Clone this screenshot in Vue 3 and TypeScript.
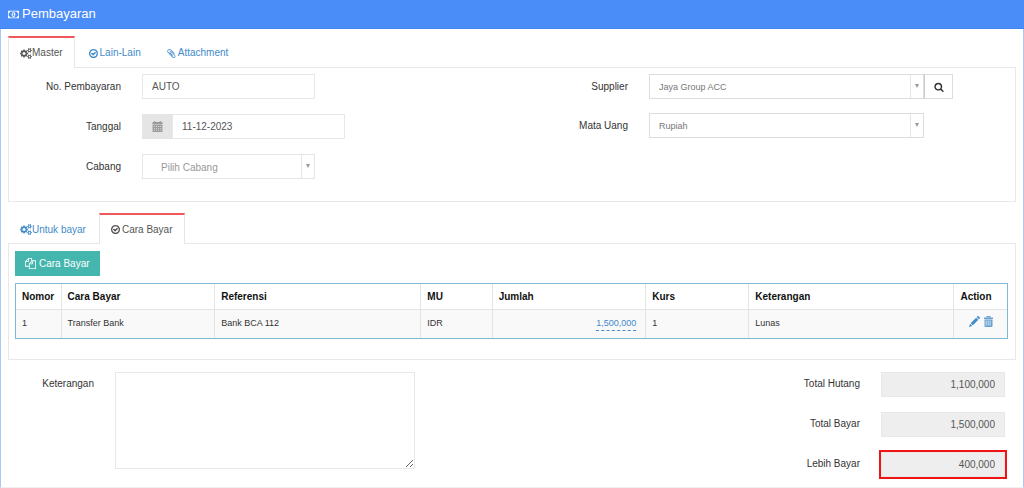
<script setup lang="ts">
import { ref } from 'vue'

interface Glyph {
  box: string
  d: string
}
interface Tab {
  label: string
  icon: string
  active: boolean
}

const icons: Record<string, Glyph> = {
  money: {
    box: '0 0 1920 1792',
    d: 'M768 1152h384v-96h-128v-448h-114l-148 137 77 80q42-37 55-57h2v288h-128v96zm512-256q0 70-21 142t-59.5 134-101.5 101-138 39-138-39-101.5-101-59.5-134-21-142 21-142 59.5-134 101.5-101 138-39 138 39 101.5 101 59.5 134 21 142zm512 256v-512q-106 0-181-75t-75-181h-1152q0 106-75 181t-181 75v512q106 0 181 75t75 181h1152q0-106 75-181t181-75zm128-832v1152q0 26-19 45t-45 19h-1792q-26 0-45-19t-19-45v-1152q0-26 19-45t45-19h1792q26 0 45 19t19 45z',
  },
  cogs: {
    box: '0 0 1920 1792',
    d: 'M896 896q0-106-75-181t-181-75-181 75-75 181 75 181 181 75 181-75 75-181zm768 512q0-52-38-90t-90-38-90 38-38 90q0 53 37.5 90.5t90.5 37.5 90.5-37.5 37.5-90.5zm0-1024q0-52-38-90t-90-38-90 38-38 90q0 53 37.5 90.5t90.5 37.5 90.5-37.5 37.5-90.5zm-384 421v185q0 10-7 19.5t-16 10.5l-155 24q-11 35-32 76 34 48 90 115 7 11 7 20 0 12-7 19-23 30-82.5 89.5t-78.5 59.5q-11 0-21-7l-115-90q-37 19-77 31-11 108-23 155-7 24-30 24h-186q-11 0-20-7.5t-10-17.5l-23-153q-34-10-75-31l-118 89q-7 7-20 7-11 0-21-8-144-133-144-160 0-9 7-19 10-14 41-53t47-61q-23-44-35-82l-152-24q-10-1-17-9.5t-7-19.5v-185q0-10 7-19.5t16-10.5l155-24q11-35 32-76-34-48-90-115-7-11-7-20 0-12 7-20 22-30 82-89t79-59q11 0 21 7l115 90q34-18 77-32 11-108 23-154 7-24 30-24h186q11 0 20 7.5t10 17.5l23 153q34 10 75 31l118-89q8-7 20-7 11 0 21 8 144 133 144 160 0 8-7 19-12 16-42 54t-45 60q23 48 34 82l152 23q10 2 17 10.5t7 19.5zm640 533v140q0 16-149 31-12 27-30 52 51 113 51 138 0 4-4 7-122 71-124 71-8 0-46-47t-52-68q-20 2-30 2t-30-2q-14 21-52 68t-46 47q-2 0-124-71-4-3-4-7 0-25 51-138-18-25-30-52-149-15-149-31v-140q0-16 149-31 13-29 30-52-51-113-51-138 0-4 4-7 4-2 35-20t59-34 30-16q8 0 46 46.5t52 67.5q20-2 30-2t30 2q51-71 92-112l6-2q4 0 124 70 4 3 4 7 0 25-51 138 17 23 30 52 149 15 149 31zm0-1024v140q0 16-149 31-12 27-30 52 51 113 51 138 0 4-4 7-122 71-124 71-8 0-46-47t-52-68q-20 2-30 2t-30-2q-14 21-52 68t-46 47q-2 0-124-71-4-3-4-7 0-25 51-138-18-25-30-52-149-15-149-31v-140q0-16 149-31 13-29 30-52-51-113-51-138 0-4 4-7 4-2 35-20t59-34 30-16q8 0 46 46.5t52 67.5q20-2 30-2t30 2q51-71 92-112l6-2q4 0 124 70 4 3 4 7 0 25-51 138 17 23 30 52 149 15 149 31z',
  },
  check: {
    box: '128 128 1536 1536',
    d: 'M1299 813l-422 422q-19 19-45 19t-45-19l-294-294q-19-19-19-45t19-45l102-102q19-19 45-19t45 19l147 147 275-275q19-19 45-19t45 19l102 102q19 19 19 45t-19 45zm141 83q0-148-73-273t-198-198-273-73-273 73-198 198-73 273 73 273 198 198 273 73 273-73 198-198 73-273zm224 0q0 209-103 385.5t-279.5 279.5-385.5 103-385.5-103-279.5-279.5-103-385.5 103-385.5 279.5-279.5 385.5-103 385.5 103 279.5 279.5 103 385.5z',
  },
  clip: {
    box: '152 128 1536 1536',
    d: 'M1596 1385q0 117-79 196t-196 79q-135 0-235-100l-777-776q-113-115-113-271 0-159 110-270t269-111q158 0 273 113l605 606q10 10 10 22 0 16-30.5 46.5t-46.5 30.5q-13 0-23-10l-606-607q-79-77-181-77-106 0-179 75t-73 181q0 105 76 181l776 777q63 63 145 63 64 0 106-42t42-106q0-82-63-145l-581-581q-26-24-60-24-29 0-48 19t-19 48q0 32 25 59l410 410q10 10 10 22 0 16-31 47t-47 31q-12 0-22-10l-410-410q-63-61-63-149 0-82 57-139t139-57q88 0 149 63l581 581q100 98 100 235z',
  },
  search: {
    box: '0 0 1792 1792',
    d: 'M1216 832q0-185-131.5-316.5t-316.5-131.5-316.5 131.5-131.5 316.5 131.5 316.5 316.5 131.5 316.5-131.5 131.5-316.5zm512 832q0 52-38 90t-90 38q-54 0-90-38l-343-342q-179 124-399 124-143 0-273.5-55.5t-225-150-150-225-55.5-273.5 55.5-273.5 150-225 225-150 273.5-55.5 273.5 55.5 225 150 150 225 55.5 273.5q0 220-124 399l343 343q37 37 37 90z',
  },
  files: {
    box: '0 0 1792 1792',
    d: 'M1696 384q40 0 68 28t28 68v1216q0 40-28 68t-68 28h-960q-40 0-68-28t-28-68v-288h-544q-40 0-68-28t-28-68v-672q0-40 20-88t48-76l408-408q28-28 76-48t88-20h416q40 0 68 28t28 68v328q68-40 128-40h416zm-544 213l-299 299h299v-299zm-640-384l-299 299h299v-299zm196 647l316-316v-416h-384v416q0 40-28 68t-68 28h-416v640h512v-256q0-40 20-88t48-76zm956 804v-1152h-384v416q0 40-28 68t-68 28h-416v640h896z',
  },
}

const masterTabs: Tab[] = [
  { label: 'Master', icon: 'cogs', active: true },
  { label: 'Lain-Lain', icon: 'check', active: false },
  { label: 'Attachment', icon: 'clip', active: false },
]
const detailTabs: Tab[] = [
  { label: 'Untuk bayar', icon: 'cogs', active: false },
  { label: 'Cara Bayar', icon: 'check', active: true },
]
const columns = ['Nomor', 'Cara Bayar', 'Referensi', 'MU', 'Jumlah', 'Kurs', 'Keterangan', 'Action']
const payments = [
  { no: 1, method: 'Transfer Bank', reference: 'Bank BCA 112', currency: 'IDR', amount: '1,500,000', rate: 1, note: 'Lunas' },
]
const totals = [
  { id: 'hutang', label: 'Total Hutang', value: '1,100,000', marked: false },
  { id: 'bayar', label: 'Total Bayar', value: '1,500,000', marked: false },
  { id: 'lebih', label: 'Lebih Bayar', value: '400,000', marked: true },
]

const number = ref('AUTO')
const date = ref('11-12-2023')
const branch = ref('')
const supplier = ref('Jaya Group ACC')
const currency = ref('Rupiah')
const note = ref('')
</script>

<template>
  <main class="window">
    <header class="title-bar">
      <svg class="icon wide" :viewBox="icons.money.box" aria-hidden="true"><path :d="icons.money.d" /></svg>
      <h1>Pembayaran</h1>
    </header>

    <div class="content">
      <nav class="tabs">
        <a v-for="tab in masterTabs" :key="tab.label" href="#" :class="['tab', { active: tab.active }]">
          <svg :class="['icon', tab.icon]" :viewBox="icons[tab.icon].box" aria-hidden="true"><path :d="icons[tab.icon].d" /></svg>
          <span>{{ tab.label }}</span>
        </a>
      </nav>

      <section class="panel master">
        <div class="fields left">
          <div class="row">
            <label for="number">No. Pembayaran</label>
            <input id="number" v-model="number" class="control short" type="text" />
          </div>
          <div class="row">
            <label for="date">Tanggal</label>
            <div class="date-group">
              <span class="addon">
                <svg class="calendar" viewBox="0 0 20 20" aria-hidden="true">
                  <path d="M1 2h3V0h2v2h8V0h2v2h3v4H1z" />
                  <path d="M1 7h18v13H1zM3 9v2h2V9zm4 0v2h2V9zm4 0v2h2V9zm4 0v2h2V9zM3 13v2h2v-2zm4 0v2h2v-2zm4 0v2h2v-2zm4 0v2h2v-2zM3 17v1h2v-1zm4 0v1h2v-1zm4 0v1h2v-1zm4 0v1h2v-1z" fill-rule="evenodd" />
                </svg>
              </span>
              <input id="date" v-model="date" class="control short" type="text" />
            </div>
          </div>
          <div class="row">
            <label for="branch">Cabang</label>
            <div class="picker short empty">
              <select id="branch" v-model="branch">
                <option value="">Pilih Cabang</option>
              </select>
              <span class="caret"></span>
            </div>
          </div>
        </div>

        <div class="fields right">
          <div class="row">
            <label for="supplier">Supplier</label>
            <div class="picker long">
              <select id="supplier" v-model="supplier">
                <option>Jaya Group ACC</option>
              </select>
              <span class="caret"></span>
            </div>
            <button class="search" type="button" aria-label="Cari supplier">
              <svg class="icon" :viewBox="icons.search.box" aria-hidden="true"><path :d="icons.search.d" /></svg>
            </button>
          </div>
          <div class="row">
            <label for="currency">Mata Uang</label>
            <div class="picker long">
              <select id="currency" v-model="currency">
                <option>Rupiah</option>
              </select>
              <span class="caret"></span>
            </div>
          </div>
        </div>
      </section>

      <nav class="tabs second">
        <a v-for="tab in detailTabs" :key="tab.label" href="#" :class="['tab', { active: tab.active }]">
          <svg :class="['icon', tab.icon]" :viewBox="icons[tab.icon].box" aria-hidden="true"><path :d="icons[tab.icon].d" /></svg>
          <span>{{ tab.label }}</span>
        </a>
      </nav>

      <section class="panel detail">
        <button class="add" type="button">
          <svg class="icon files" :viewBox="icons.files.box" aria-hidden="true"><path :d="icons.files.d" /></svg>
          Cara Bayar
        </button>
        <table>
          <colgroup>
            <col class="c-no" /><col class="c-method" /><col class="c-ref" /><col class="c-cur" />
            <col class="c-amount" /><col class="c-rate" /><col class="c-note" /><col class="c-action" />
          </colgroup>
          <thead>
            <tr>
              <th v-for="column in columns" :key="column" scope="col">{{ column }}</th>
            </tr>
          </thead>
          <tbody>
            <tr v-for="item in payments" :key="item.no">
              <td>{{ item.no }}</td>
              <td>{{ item.method }}</td>
              <td>{{ item.reference }}</td>
              <td>{{ item.currency }}</td>
              <td class="amount"><a href="#">{{ item.amount }}</a></td>
              <td>{{ item.rate }}</td>
              <td>{{ item.note }}</td>
              <td>
                <div class="actions">
                  <button type="button" aria-label="Ubah">
                    <svg viewBox="0 0 20 20" aria-hidden="true">
                      <path d="M0 20l2-6 4 4zM3 13L13 3l4 4L7 17zM14 2l1.500-1.500q1-1 2 0l2 2q1 1 0 2L18 6z" />
                    </svg>
                  </button>
                  <button class="trash" type="button" aria-label="Hapus">
                    <svg viewBox="0 0 20 22" aria-hidden="true">
                      <path d="M6 3V1q0-1 1-1h6q1 0 1 1v2h4q1 0 1 1v2H1V4q0-1 1-1zm2 0h4V2H8z" fill-rule="evenodd" />
                      <path d="M2 7h16v13q0 2-2 2H4q-2 0-2-2zM4.500 9v10H6V9zm4 0v10H10V9zm4 0v10H14V9z" fill-rule="evenodd" />
                    </svg>
                  </button>
                </div>
              </td>
            </tr>
          </tbody>
        </table>
      </section>

      <section class="summary">
        <div class="note">
          <label for="note">Keterangan</label>
          <textarea id="note" v-model="note"></textarea>
        </div>
        <div class="totals">
          <div v-for="total in totals" :key="total.id" class="row">
            <label :for="total.id">{{ total.label }}</label>
            <input :id="total.id" :class="['control', { marked: total.marked }]" type="text" :value="total.value" readonly />
          </div>
        </div>
      </section>
    </div>
  </main>
</template>

<style>
body {
  margin: 0;
  background: #fdfdfd;
}
</style>

<style scoped>
.window {
  box-sizing: border-box;
  border: 1px solid #a9c8f8;
  border-top: 0;
  border-bottom-color: #f0f0f0;
  background: #fff;
  color: #333;
  font: 10px/14px "Liberation Sans", Arial, sans-serif;
}
.window *,
.window *::before {
  box-sizing: border-box;
}
input,
select,
textarea,
button {
  margin: 0;
  font: inherit;
  border-radius: 0;
  outline: 0;
}
a {
  color: #428bca;
  text-decoration: none;
}
.icon {
  display: block;
  flex: none;
  width: 10px;
  height: 10px;
  fill: currentColor;
}
.icon.wide {
  width: 11px;
  height: 11px;
}
.icon.cogs {
  width: 12px;
  height: 11px;
}
.icon.files {
  width: 11px;
  height: 11px;
}
.icon.check,
.icon.clip {
  width: 9px;
  height: 9px;
  margin-right: 2px;
}
.title-bar {
  display: flex;
  align-items: center;
  gap: 3px;
  height: 29px;
  margin: 0 -1px;
  padding: 0 8px;
  border-bottom: 1px solid #4285ec;
  background: #4b8df8;
  color: #fff;
}
h1 {
  margin: 0;
  font-size: 13px;
  line-height: 16px;
  font-weight: 400;
}
.content {
  padding: 7px 7px 10px;
}
.tabs {
  display: flex;
  gap: 2px;
}
.tabs.second {
  gap: 1px;
  margin-top: 11px;
}
.tab {
  display: flex;
  align-items: center;
  height: 32px;
  margin-bottom: -1px;
  padding: 0 11px;
  border: 1px solid transparent;
  border-top-width: 2px;
  border-bottom: 0;
}
.second .tab {
  height: 31px;
}
.tab.active {
  border-color: #f0585c #e6e6e6;
  background: #fff;
  color: #555;
}
.panel {
  border: 1px solid #e8e8e8;
}
.master {
  display: flex;
  justify-content: space-between;
  min-height: 134px;
  padding: 6px 62px 22px 0;
}
.fields {
  display: flex;
  flex-direction: column;
  gap: 15px;
}
.fields.right {
  gap: 14px;
}
.row {
  display: flex;
}
.row label,
.note label {
  padding-top: 5px;
  margin-right: 21px;
  text-align: right;
}
.master label {
  padding-top: 6px;
}
.left label {
  width: 112px;
}
.right label {
  width: 60px;
}
.control {
  height: 25px;
  padding: 0 9px;
  border: 1px solid #e8e8e8;
  background: #fff;
  color: #555;
}
.short {
  width: 173px;
}
.long {
  width: 275px;
}
.date-group {
  display: flex;
}
.addon {
  display: flex;
  align-items: center;
  justify-content: center;
  width: 30px;
  background: #e5e5e5;
}
.calendar {
  width: 11px;
  height: 11px;
  fill: #999;
}
.picker {
  position: relative;
  height: 25px;
}
.picker select {
  width: 100%;
  height: 100%;
  padding: 0 30px 0 9px;
  border: 1px solid #ddd;
  background: #fff;
  color: #777;
  font-size: 9px;
  appearance: none;
}
.picker.empty select {
  padding: 2px 30px 0 18px;
  border-color: #e5e5e5;
  color: #999;
  font-size: 10px;
}
.caret {
  position: absolute;
  top: 1px;
  right: 1px;
  bottom: 1px;
  display: flex;
  align-items: center;
  justify-content: center;
  width: 13px;
  padding-bottom: 2px;
  border-left: 1px solid #e5e5e5;
  pointer-events: none;
}
.caret::before {
  content: "";
  border: 2px solid transparent;
  border-top: 4px solid #999;
  border-bottom: 0;
}
.search {
  display: flex;
  align-items: center;
  justify-content: center;
  width: 29px;
  height: 25px;
  padding: 0;
  border: 1px solid #ddd;
  border-left-color: #ccc;
  background: #fff;
  color: #333;
}
.detail {
  min-height: 117px;
  padding: 7px 7px 20px 6px;
}
.add {
  display: flex;
  align-items: center;
  gap: 3px;
  height: 25px;
  padding: 0 10px;
  border: 0;
  background: #44b6ae;
  color: #fff;
}
table {
  width: 100%;
  margin-top: 7px;
  table-layout: fixed;
  border-collapse: separate;
  border-spacing: 0;
  border: 1px solid #7fb9d6;
}
.c-no { width: 4.6%; }
.c-method { width: 15.5%; }
.c-ref { width: 20.8%; }
.c-cur { width: 7.2%; }
.c-amount { width: 15.5%; }
.c-rate { width: 10.4%; }
.c-note { width: 20.7%; }
.c-action { width: 5.3%; }
th,
td {
  padding: 6px 0 5px 6px;
  border-right: 1px solid #e4e4e4;
  text-align: left;
  vertical-align: top;
}
th:last-child,
td:last-child {
  border-right: 0;
}
th {
  color: #111;
}
td {
  height: 29px;
  border-top: 1px solid #e4e4e4;
  background: #f9f9f9;
  font-size: 9px;
}
td.amount {
  padding-right: 9px;
  text-align: right;
}
.amount a {
  display: inline-block;
  border-bottom: 1px dashed #428bca;
}
.actions {
  display: flex;
  justify-content: center;
  gap: 3px;
  padding-right: 5px;
}
.actions button {
  padding: 0;
  border: 0;
  background: none;
  color: #428bca;
}
.actions svg {
  display: block;
  width: 11px;
  height: 11px;
  fill: currentColor;
}
.actions .trash {
  opacity: 0.8;
}
.summary {
  display: flex;
  justify-content: space-between;
  margin-top: 12px;
  padding-right: 11px;
}
.note {
  display: flex;
}
.note label {
  width: 86px;
}
textarea {
  width: 300px;
  height: 97px;
  border: 1px solid #e8e8e8;
  background: #fff;
  resize: both;
}
.totals {
  display: flex;
  flex-direction: column;
  gap: 15px;
}
.totals .row {
  justify-content: flex-end;
}
.totals .control {
  width: 124px;
  background: #eee;
  text-align: right;
}
.totals .marked {
  outline: 2px solid #f01414;
}
</style>
